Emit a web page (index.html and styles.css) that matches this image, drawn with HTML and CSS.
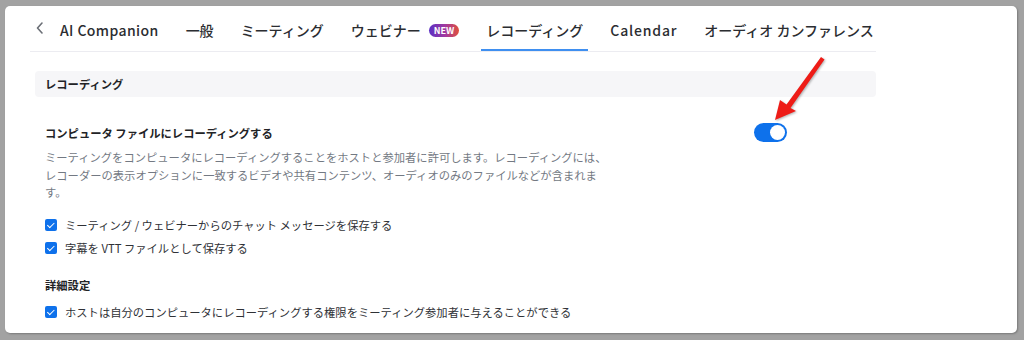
FILE: index.html
```html
<!DOCTYPE html>
<html lang="ja">
<head>
    <meta charset="UTF-8">
    <meta name="viewport" content="width=device-width, initial-scale=1.0">
    <title>レコーディング設定</title>
    <link rel="stylesheet" href="styles.css">
</head>
<body>

    <div class="panel">
        <div class="content">
            <!-- Tabs -->
            <div class="tabs">
                <span class="tab-back">
                    <svg width="10" height="14" viewBox="0 0 10 14"><polyline points="7,2 2.5,7 7,12" fill="none" stroke="#6b6f76" stroke-width="1.6" stroke-linecap="round" stroke-linejoin="round"/></svg>
                </span>
                <span class="tab latin">AI Companion</span>
                <span class="tab">一般</span>
                <span class="tab">ミーティング</span>
                <span class="tab">ウェビナー <span class="badge">NEW</span></span>
                <span class="tab active">レコーディング</span>
                <span class="tab latin wide">Calendar</span>
                <span class="tab">オーディオ カンファレンス</span>
            </div>

            <div class="section-title">レコーディング</div>

            <div class="setting">
                <div class="setting-head">
                    <span class="setting-name">コンピュータ ファイルにレコーディングする</span>
                    <span class="toggle"><span class="knob"></span></span>
                </div>
                <p class="setting-desc">ミーティングをコンピュータにレコーディングすることをホストと参加者に許可します。レコーディングには、レコーダーの表示オプションに一致するビデオや共有コンテンツ、オーディオのみのファイルなどが含まれます。</p>

                <label class="check"><span class="box"></span>ミーティング / ウェビナーからのチャット メッセージを保存する</label>
                <label class="check"><span class="box"></span>字幕を VTT ファイルとして保存する</label>

                <div class="sub-title">詳細設定</div>
                <label class="check"><span class="box"></span>ホストは自分のコンピュータにレコーディングする権限をミーティング参加者に与えることができる</label>
            </div>
        </div>
    </div>

    <!-- Red pointer arrow -->
    <svg class="pointer" width="1024" height="340" viewBox="0 0 1024 340">
        <polygon points="775,120 780,100 786.5,104.5 821,57 824.5,59.5 790.5,108 796,111" fill="#ee1c17"/>
    </svg>

</body>
</html>
```

FILE: styles.css
```css
body {
    margin: 0;
    background-color: #a2a2a2;
    font-family: "Noto Sans CJK JP", "Noto Sans", sans-serif;
    height: 340px;
    overflow: hidden;
    position: relative;
}
.panel {
    margin: 6px 7px 0 5px;
    height: 327px;
    background-color: #ffffff;
    border-radius: 5px;
    box-shadow: 1px 1px 2px rgba(0, 0, 0, 0.25);
    overflow: hidden;
}
.content {
    margin-left: 25px;
    width: 846px;
}
.tabs {
    display: flex;
    align-items: flex-end;
    height: 45px;
    border-bottom: 1px solid #ececf1;
    white-space: nowrap;
    overflow: hidden;
    gap: 17px;
}
.tab-back {
    display: flex;
    align-items: center;
    padding: 0 0 16px 5px;
    margin-right: -7px;
}
.tab {
    font-size: 14px;
    font-weight: 500;
    color: #2b2d31;
    padding: 0 5px 9px;
    border-bottom: 2px solid transparent;
    line-height: 20px;
    display: flex;
    align-items: center;
}
.tab.latin {
    letter-spacing: 0.4px;
}
.tab.wide {
    letter-spacing: 0.8px;
}
.tab.active {
    border-bottom-color: #3f8ff0;
}
.badge {
    margin-left: 8px;
    font-size: 9px;
    font-weight: 700;
    color: #ffffff;
    line-height: 13px;
    padding: 0 5px;
    border-radius: 7px;
    letter-spacing: 0;
    background: linear-gradient(90deg, #5b2fc4, #a33a9e 55%, #e0503a);
}
.section-title {
    margin: 19px 0 0 5px;
    height: 26px;
    line-height: 26px;
    background-color: #f6f6f8;
    border-radius: 4px;
    padding-left: 10px;
    font-size: 11.3px;
    font-weight: 700;
    color: #222326;
}
.setting {
    padding-left: 15px;
}
.setting-head {
    display: flex;
    justify-content: space-between;
    align-items: center;
    width: 742px;
    margin-top: 26px;
    height: 19px;
}
.setting-name {
    font-size: 11.3px;
    font-weight: 700;
    color: #222326;
}
.toggle {
    width: 33px;
    height: 19px;
    border-radius: 10px;
    background-color: #0e71eb;
    display: flex;
    justify-content: flex-end;
    align-items: center;
    padding-right: 2px;
    box-sizing: border-box;
}
.knob {
    width: 15px;
    height: 15px;
    border-radius: 50%;
    background-color: #ffffff;
}
.setting-desc {
    margin: 7px 0 0;
    width: 568px;
    font-size: 11.3px;
    line-height: 17.5px;
    color: #737983;
}
.check {
    display: flex;
    align-items: center;
    font-size: 11.3px;
    color: #2f3136;
    height: 23px;
}
.setting-desc + .check {
    margin-top: 12px;
}
.box {
    width: 12px;
    height: 12px;
    border-radius: 2px;
    background-color: #0e71eb;
    margin-right: 8px;
    position: relative;
}
.box::after {
    content: "";
    position: absolute;
    left: 3.5px;
    top: 2px;
    width: 3px;
    height: 5.5px;
    border: solid #ffffff;
    border-width: 0 1.6px 1.6px 0;
    transform: rotate(45deg);
}
.sub-title {
    margin-top: 14px;
    font-size: 11.3px;
    font-weight: 700;
    color: #222326;
    height: 22px;
    line-height: 22px;
    margin-bottom: 5px;
}
.pointer {
    position: absolute;
    left: 0;
    top: 0;
    filter: drop-shadow(1px 1px 1px rgba(0, 0, 0, 0.3));
}
```
